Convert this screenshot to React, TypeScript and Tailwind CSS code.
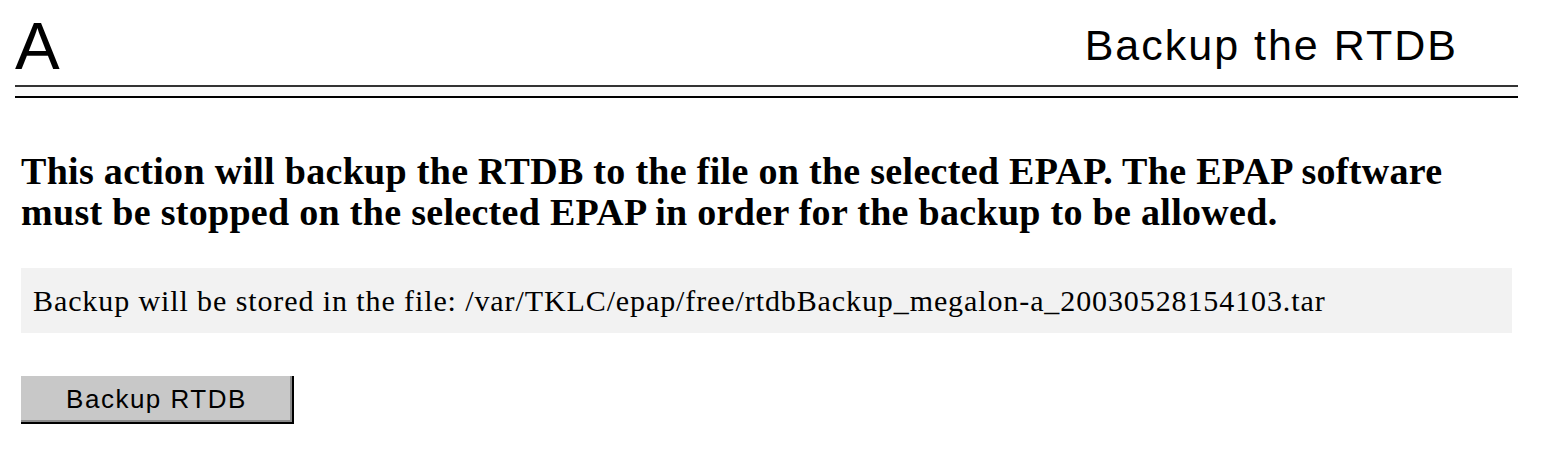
export default function App() {
  return (
    <div className="h-[454px] w-[1554px] bg-white text-black">
      <header className="flex items-end justify-between pl-[15px] pr-[96px] pt-[12px]">
        <span className="font-['Liberation_Sans',Arial,sans-serif] text-[67px] leading-none">A</span>
        <h1 className="mb-[12px] font-['Liberation_Sans',Arial,sans-serif] text-[43px] font-normal leading-none tracking-[2px]">
          Backup the RTDB
        </h1>
      </header>
      <div className="ml-[15px] mr-[36px] mt-[6px] h-[13px] border-b-2 border-t-2 border-b-black border-t-[#333333] bg-[#fafafa]" />

      <main className="px-[21px] pr-[42px]">
        <p className="mt-[53px] font-['Liberation_Serif','Times_New_Roman',serif] text-[38px] font-bold leading-[41px] tracking-[0.3px]">
          This action will backup the RTDB to the file on the selected EPAP. The EPAP software
          <br />
          must be stopped on the selected EPAP in order for the backup to be allowed.
        </p>

        <div className="mt-[35px] flex h-[65px] items-center bg-[#f2f2f2] px-[12px] font-['Liberation_Serif','Times_New_Roman',serif] text-[30px] tracking-[0.9px]">
          Backup will be stored in the file: /var/TKLC/epap/free/rtdbBackup_megalon-a_20030528154103.tar
        </div>

        <button
          type="button"
          className="mt-[43px] h-[48px] w-[273px] border-b-2 border-r-2 border-b-black border-r-black bg-[#c8c8c8] font-['Liberation_Sans',Arial,sans-serif] text-[26px] tracking-[1.5px] shadow-[inset_-2px_-2px_0_#8a8a8a]"
        >
          Backup RTDB
        </button>
      </main>
    </div>
  )
}
